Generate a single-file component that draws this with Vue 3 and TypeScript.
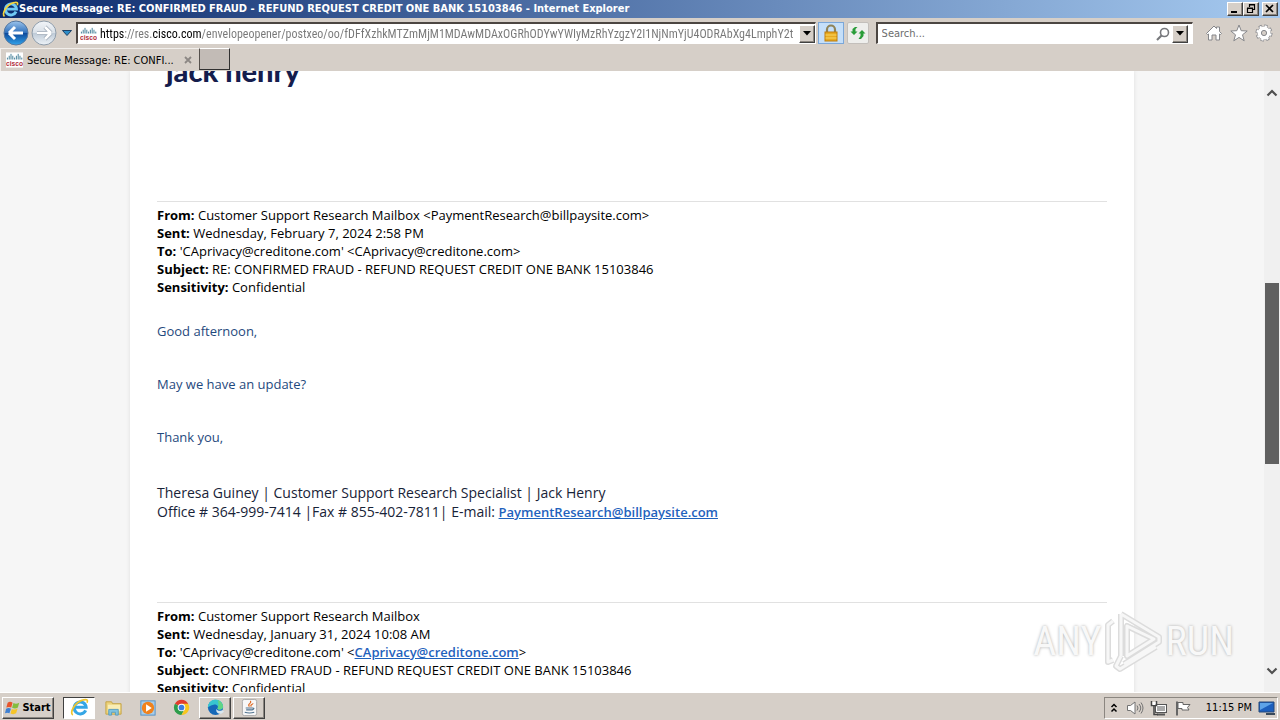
<script setup lang="ts">
import { ref } from 'vue'

interface Header {
  label: string
  value: string
  link?: string
  tail?: string
}

const url = ref('https://res.cisco.com/envelopeopener/postxeo/oo/fDFfXzhkMTZmMjM1MDAwMDAxOGRhODYwYWIyMzRhYzgzY2I1NjNmYjU4ODRAbXg4LmphY2t')
const search = ref('')

const first: Header[] = [
  { label: 'From:', value: 'Customer Support Research Mailbox <PaymentResearch@billpaysite.com>' },
  { label: 'Sent:', value: 'Wednesday, February 7, 2024 2:58 PM' },
  { label: 'To:', value: "'CAprivacy@creditone.com' <CAprivacy@creditone.com>" },
  { label: 'Subject:', value: 'RE: CONFIRMED FRAUD - REFUND REQUEST CREDIT ONE BANK 15103846' },
  { label: 'Sensitivity:', value: 'Confidential' },
]
const second: Header[] = [
  { label: 'From:', value: 'Customer Support Research Mailbox' },
  { label: 'Sent:', value: 'Wednesday, January 31, 2024 10:08 AM' },
  { label: 'To:', value: "'CAprivacy@creditone.com' <", link: 'CAprivacy@creditone.com', tail: '>' },
  { label: 'Subject:', value: 'CONFIRMED FRAUD - REFUND REQUEST CREDIT ONE BANK 15103846' },
  { label: 'Sensitivity:', value: 'Confidential' },
]
const ciscoBars = [2, 4, 6, 4, 2, 4, 6, 4, 2]
</script>

<template>
  <div class="window">
    <header class="titlebar">
      <svg class="ie" viewBox="0 0 20 20" aria-hidden="true">
        <path d="M16.500 12.500A6.500 6.500 0 1 1 17 9.500H6" fill="none" stroke="#6fc8f4" stroke-width="3.400" />
        <path d="M3 18C-1 16 5 4 14 2c4-1 5 0 4 3" fill="none" stroke="#f5d33c" stroke-width="2" />
      </svg>
      <h1>Secure Message: RE: CONFIRMED FRAUD - REFUND REQUEST CREDIT ONE BANK 15103846 - Internet Explorer</h1>
      <div class="controls">
        <button class="raised" aria-label="Minimize"><svg viewBox="0 0 12 10"><path d="M2 8h6" stroke="#000" stroke-width="2" /></svg></button>
        <button class="raised" aria-label="Restore"><svg viewBox="0 0 12 10"><path d="M4.500 3V.5h5v5H8M4 1h6M2.500 4.500h5v4h-5zM2 4h6" fill="none" stroke="#000" stroke-width="1.200" /></svg></button>
        <button class="raised close" aria-label="Close"><svg viewBox="0 0 12 10"><path d="M2 1l7 7M9 1L2 8" stroke="#000" stroke-width="1.700" /></svg></button>
      </div>
    </header>

    <nav class="toolbar" aria-label="Navigation">
      <button class="plain round" aria-label="Back">
        <svg viewBox="0 0 26 26">
          <defs>
            <linearGradient id="back" x1="0" y1="0" x2="0" y2="1"><stop offset="0" stop-color="#9cc4ec" /><stop offset=".48" stop-color="#3272bd" /><stop offset=".5" stop-color="#0d4799" /><stop offset="1" stop-color="#31a4ec" /></linearGradient>
          </defs>
          <circle cx="13" cy="13" r="12" fill="url(#back)" stroke="#55779f" />
          <path d="M6 13l6-6M6 13l6 6M6.500 13H20" fill="none" stroke="#fff" stroke-width="3" />
        </svg>
      </button>
      <button class="plain round" aria-label="Forward">
        <svg viewBox="0 0 26 26">
          <defs>
            <linearGradient id="fwd" x1="0" y1="0" x2="0" y2="1"><stop offset="0" stop-color="#f2f5f9" /><stop offset=".48" stop-color="#d9e0e7" /><stop offset=".5" stop-color="#bdc9d6" /><stop offset="1" stop-color="#eef3f8" /></linearGradient>
          </defs>
          <circle cx="13" cy="13" r="12" fill="url(#fwd)" stroke="#8f9dab" />
          <path d="M20 13l-6-6M20 13l-6 6M19.500 13H6" fill="none" stroke="#98a5b3" stroke-width="4" />
          <path d="M20 13l-6-6M20 13l-6 6M19.500 13H6" fill="none" stroke="#fff" stroke-width="2.600" />
        </svg>
      </button>
      <button class="plain recent" aria-label="Recent pages"><svg viewBox="0 0 12 8"><path d="M1.500 1.500h9L6 6.500z" fill="#2c8dc8" stroke="#1b4167" /></svg></button>

      <div class="field address">
        <svg class="cisco" viewBox="0 0 18 16" aria-hidden="true">
          <rect width="18" height="16" fill="#fff" />
          <path v-for="(h, i) in ciscoBars" :key="i" :d="`M${1.5 + i * 1.9} 7.5v-${h}`" stroke="#3c7a94" stroke-width="1" />
          <text x="9" y="14" text-anchor="middle" class="cisco-word">cisco</text>
        </svg>
        <input v-model="url" class="url" aria-label="Address">
        <button class="raised drop" aria-label="Show address list"><svg viewBox="0 0 8 5"><path d="M0 0h8L4 4.500z" /></svg></button>
      </div>
      <button class="lock" aria-label="Security report">
        <svg viewBox="0 0 18 18"><path d="M5 9V5.500a4 4 0 0 1 8 0V9" fill="none" stroke="#8f8358" stroke-width="2.200" /><rect x="3" y="8" width="12" height="9" fill="#e8aa20" stroke="#bd7c0c" /><path d="M3.500 11h11M3.500 14h11" stroke="#f8d867" /></svg>
      </button>
      <button class="refresh" aria-label="Refresh">
        <svg viewBox="0 0 18 18"><path d="M1.500 7.500L5 11l3.500-3.500H6.500V5l2-2H6L3.500 5v2.500zM16.500 9.500L13 6 9.500 9.500h2V12l-2 3H12l2.500-3V9.500z" fill="#299c38" /></svg>
      </button>

      <div class="field finder">
        <input v-model="search" class="query" aria-label="Search" placeholder="Search...">
        <button class="plain glass" aria-label="Go"><svg viewBox="0 0 14 14"><circle cx="8.500" cy="5.500" r="4" fill="none" stroke="#77787c" stroke-width="1.600" /><path d="M5.500 8.500L1 13" stroke="#77787c" stroke-width="2.200" /></svg></button>
        <button class="raised drop" aria-label="Search providers"><svg viewBox="0 0 8 5"><path d="M0 0h8L4 4.500z" /></svg></button>
      </div>
      <div class="tools">
        <button class="plain" aria-label="Home"><svg viewBox="0 0 18 18"><path d="M1.500 9.500L9 2l2.500 2.500V3h3v4.500l2 2-1 1-1-.5v6H11v-5H7v5H3.500v-6l-1 .5z" fill="#fff" stroke="#85868a" /></svg></button>
        <button class="plain" aria-label="Favorites"><svg viewBox="0 0 18 18"><path d="M9 1l2.200 5.700 6 .3-4.700 3.800 1.700 6L9 13.400l-5.200 3.400 1.700-6L.8 7l6-.3z" fill="#fff" stroke="#85868a" /></svg></button>
        <button class="plain" aria-label="Tools"><svg viewBox="0 0 18 18"><circle cx="9" cy="9" r="7" fill="none" stroke="#85868a" stroke-width="3" stroke-dasharray="3.200 2.300" /><circle cx="9" cy="9" r="5" fill="#fff" stroke="#85868a" stroke-width="3.600" /><circle cx="9" cy="9" r="6.800" fill="none" stroke="#fff" stroke-width="1.800" stroke-dasharray="2.200 3.140" stroke-dashoffset="-.5" /><circle cx="9" cy="9" r="4.600" fill="none" stroke="#fff" stroke-width="3.600" /><circle cx="9" cy="9" r="2.600" fill="#d6cfc8" stroke="#85868a" /></svg></button>
      </div>
    </nav>

    <div class="tabs">
      <div class="tab">
        <svg class="cisco" viewBox="0 0 18 16" aria-hidden="true">
          <rect width="18" height="16" fill="#fff" />
          <path v-for="(h, i) in ciscoBars" :key="i" :d="`M${1.5 + i * 1.9} 7.5v-${h}`" stroke="#3c7a94" stroke-width="1" />
          <text x="9" y="14" text-anchor="middle" class="cisco-word">cisco</text>
        </svg>
        <span class="tab-title">Secure Message: RE: CONFI...</span>
        <button class="plain tab-close" aria-label="Close tab"><svg viewBox="0 0 8 8"><path d="M1 1l6 6M7 1L1 7" stroke="#8c8784" stroke-width="1.800" /></svg></button>
      </div>
      <button class="new-tab" aria-label="New tab"></button>
    </div>

    <div class="viewport">
      <main class="page">
        <article class="mail">
          <div class="brand">jack henry</div>
          <section class="quoted">
            <p v-for="h in first" :key="h.label"><b>{{ h.label }}</b> {{ h.value }}</p>
          </section>
          <div class="body">
            <p>Good afternoon,</p>
            <p>May we have an update?</p>
            <p>Thank you,</p>
          </div>
          <div class="signature">
            <p>Theresa Guiney | Customer Support Research Specialist | Jack Henry</p>
            <p>Office # 364-999-7414 |Fax # 855-402-7811| E-mail: <a href="mailto:PaymentResearch@billpaysite.com">PaymentResearch@billpaysite.com</a></p>
          </div>
          <section class="quoted">
            <p v-for="h in second" :key="h.label"><b>{{ h.label }}</b> {{ h.value }}<a v-if="h.link" :href="'mailto:' + h.link">{{ h.link }}</a>{{ h.tail }}</p>
          </section>
        </article>
      </main>
      <div class="scrollbar">
        <button class="plain" aria-label="Scroll up"><svg viewBox="0 0 12 8"><path d="M1.500 6.500L6 2l4.500 4.500" fill="none" stroke="#505050" stroke-width="2.200" /></svg></button>
        <div class="track"><div class="thumb"></div></div>
        <button class="plain" aria-label="Scroll down"><svg viewBox="0 0 12 8"><path d="M1.500 1.500L6 6l4.500-4.500" fill="none" stroke="#505050" stroke-width="2.200" /></svg></button>
      </div>
      <div class="watermark">
        <span>ANY</span>
        <svg viewBox="0 0 60 64" aria-hidden="true">
          <g fill="none" stroke-linejoin="round">
            <path d="M17 4v42M17 4l38 23v5L20 54M23 16v30l27-17zM9 11l-5 4v37l5-2M17 46l-5 10 4 3 36-22" stroke="#dcdcdc" stroke-width="6" />
            <path d="M17 4v42M17 4l38 23v5L20 54M23 16v30l27-17zM9 11l-5 4v37l5-2M17 46l-5 10 4 3 36-22" stroke="#f7f7f7" stroke-width="3" />
          </g>
        </svg>
        <span>RUN</span>
      </div>
    </div>

    <footer class="taskbar">
      <button class="raised start">
        <svg viewBox="0 0 18 18" aria-hidden="true"><path d="M3 3c2-1.500 4-1 5.500 0L7 8.500C5.500 7.500 3.500 7.500 1.500 8.500z" fill="#e8552c" /><path d="M9.500 3.500c2 1 4 1 6.500-.5L14.500 8.500c-2 1.200-4 1.200-6.500.3z" fill="#84bd3e" /><path d="M1.200 9.800c2-1 4-1 5.500 0L5 15c-1.500-1-3.500-1-5 0z" fill="#3f80d2" /><path d="M7.700 10c2 1 4 1 6.500-.3L12.500 15c-2 1.200-4 1.200-6.300.2z" fill="#f6c529" /></svg>
        <span>Start</span>
      </button>
      <div class="apps">
        <button class="app pressed" aria-label="Internet Explorer"><svg viewBox="0 0 20 20"><path d="M16.500 13A6.300 6.300 0 1 1 17 9.800H6" fill="none" stroke="#35a6e5" stroke-width="3.200" /><path d="M3 18C-1 16 5 4 14 2c4-1 5 0 4 3" fill="none" stroke="#efc52f" stroke-width="1.800" /></svg></button>
        <button class="app" aria-label="Explorer"><svg viewBox="0 0 20 20"><path d="M2 4h6l1 2h9v11H2z" fill="#ecd27b" stroke="#c5a345" /><path d="M4 7h13v7H4z" fill="#f9edb6" /><path d="M5 18v-6h10v6h-3v-3H8v3z" fill="#7fc3e0" stroke="#5a9cbd" /></svg></button>
        <button class="app" aria-label="Media Player"><svg viewBox="0 0 20 20"><rect x="3" y="3" width="15" height="15" fill="#a8cde9" stroke="#5591c5" /><circle cx="10.500" cy="10.500" r="6.500" fill="#f0821d" /><path d="M8.500 6.500l6 4-6 4z" fill="#fff" /></svg></button>
        <button class="app" aria-label="Chrome"><svg viewBox="0 0 20 20"><path d="M10 10L3.100 6A8 8 0 0 1 17 6z" fill="#e23c2e" /><path d="M10 10l-6.900-4A8 8 0 0 0 10 18l3-6z" fill="#2d9d4b" /><path d="M10 10V6h7A8 8 0 0 1 10 18l3.400-6z" fill="#f7c61f" /><circle cx="10" cy="10" r="4" fill="#fff" /><circle cx="10" cy="10" r="3" fill="#3d7de0" /></svg></button>
        <button class="app raised" aria-label="Edge"><svg viewBox="0 0 20 20"><circle cx="10" cy="10" r="8" fill="#1668b8" /><path d="M2 10a8 8 0 0 1 16-1c0 4-5 4-6 2 2-2-1-5-4-4-3 .6-5 2-6 3z" fill="#38c5cf" /><path d="M12 2.300A8 8 0 0 1 18 9c0 3.500-5 4-6 2 1-2 2-5 0-8.700z" fill="#62d584" /><path d="M11 11.500c1 2 4 2.500 6.500 1.500l1.500 1.500-3 2c-3 .6-6-1.500-5-5z" fill="#d9e7ee" /></svg></button>
        <button class="app raised" aria-label="Java"><svg viewBox="0 0 20 20"><rect x="2.500" y="1.500" width="15" height="17" rx="2" fill="#f7f7f7" stroke="#a9a9a9" /><path d="M10 9c-3-3 3-3 1-6M12 9c-2-2 2-2 1.500-3.500" fill="none" stroke="#de6a24" stroke-width="1.300" /><path d="M6 10.500h7.500M6.500 12.500h6.500M13.500 10.500q2.500.5-.5 2M5 15q5 1.500 10 0" fill="none" stroke="#51738f" stroke-width="1.200" /></svg></button>
      </div>
      <div class="tray">
        <button class="plain chev" aria-label="Show hidden icons"><svg viewBox="0 0 8 10"><path d="M1.500 4L4 1.500 6.500 4M1.500 8.500L4 6l2.500 2.500" fill="none" stroke="#000" stroke-width="1.500" /></svg></button>
        <button class="plain" aria-label="Volume"><svg viewBox="0 0 18 16"><path d="M1.500 5.500h3L9 2v12l-4.500-3.500h-3z" fill="#fff" stroke="#727272" /><path d="M11 5.500q2 2.500 0 5M13 4q3.500 4 0 8M15 2.500q4 5.500 0 11" fill="none" stroke="#727272" /></svg></button>
        <button class="plain" aria-label="Network"><svg viewBox="0 0 18 16"><rect x="5.500" y="4.500" width="11" height="8" fill="#aaa" stroke="#555" /><path d="M6.500 5.500h9v6h-9z" fill="none" stroke="#fff" /><path d="M7 14.500h8" stroke="#555" stroke-width="2" /><path d="M1.500 1v4.500h5V1M4 5.500v9h4" fill="none" stroke="#444" stroke-width="1.500" /><path d="M2.500 2h3v3h-3z" fill="#fff" /></svg></button>
        <button class="plain" aria-label="Action Center"><svg viewBox="0 0 18 16"><path d="M3 1.500v14" stroke="#666" stroke-width="2" /><path d="M4 2.500h5v2h7l-2.500 3L15 10H8V8.500H4z" fill="#fff" stroke="#666" /></svg></button>
        <time>11:15 PM</time>
        <button class="plain" aria-label="Show desktop"><svg viewBox="0 0 18 16"><path d="M1 2h15v10H1z" fill="#1c5fbd" stroke="#254879" /><path d="M2 3h13L2 10z" fill="#5da3e8" /><path d="M8 14h9" stroke="#3a4a5a" stroke-width="2" /></svg></button>
      </div>
    </footer>
  </div>
</template>

<style>
body {
  margin: 0;
}
</style>

<style scoped>
* {
  box-sizing: border-box;
}
.window {
  display: flex;
  flex-direction: column;
  height: 100vh;
  overflow: hidden;
  background: #d6cfc8;
  color: #000;
  font-family: "DejaVu Sans Condensed", "DejaVu Sans", sans-serif;
  font-size: 11px;
}
svg {
  display: block;
  flex: none;
}
button {
  display: flex;
  align-items: center;
  justify-content: center;
  margin: 0;
  padding: 0;
  border: 0;
  color: #000;
  font: inherit;
}
p {
  margin: 0;
}
.plain {
  background: none;
}
.raised {
  background: #d6cfc8;
  border: 1px solid;
  border-color: #fff #404040 #404040 #fff;
  box-shadow: inset -1px -1px #8b8680;
}
.titlebar {
  display: flex;
  align-items: center;
  flex: none;
  height: 18px;
  padding: 0 2px;
  background: linear-gradient(90deg, #0b2a6c, #a6caf0);
}
.ie {
  width: 17px;
  height: 17px;
}
h1 {
  flex: 1;
  margin: 0;
  color: #fff;
  font-size: 11px;
  font-weight: 700;
  line-height: 18px;
  white-space: nowrap;
}
.controls {
  display: flex;
}
.controls button {
  width: 16px;
  height: 14px;
}
.controls svg {
  width: 12px;
  height: 10px;
}
.controls .close {
  margin-left: 3px;
}
.toolbar {
  display: flex;
  align-items: center;
  flex: none;
  height: 30px;
  padding: 0 7px 0 2px;
}
.round {
  width: 28px;
}
.round svg {
  width: 26px;
  height: 26px;
}
.recent {
  width: 18px;
}
.recent svg {
  width: 12px;
  height: 8px;
}
.field {
  display: flex;
  align-items: center;
  height: 22px;
  padding-left: 2px;
  background: #fff;
  border: 1px solid;
  border-color: #4c4642 #fff #fff #4c4642;
  border-width: 2px 1px 1px 2px;
}
.field input {
  flex: 1;
  min-width: 0;
  height: 18px;
  padding: 0;
  border: 0;
  outline: 0;
  background-color: transparent;
  font: inherit;
}
.address {
  flex: 736;
  min-width: 0;
}
.cisco {
  width: 17px;
  height: 16px;
}
.cisco-word {
  fill: #b02c3a;
  font-family: "Liberation Sans", sans-serif;
  font-size: 7px;
  font-weight: 700;
}
.field .url {
  margin: 0 0 0 3px;
  background-image: linear-gradient(90deg, #000 24px, #777 24px, #777 53px, #000 53px, #000 101px, #777 101px);
  -webkit-background-clip: text;
  background-clip: text;
  color: transparent;
  font-family: "Roboto Condensed", "Liberation Sans Narrow", sans-serif;
  font-size: 12px;
}
.drop {
  width: 16px;
  height: 18px;
}
.drop svg {
  width: 8px;
  height: 5px;
}
.lock {
  width: 26px;
  height: 22px;
  margin-left: 2px;
  background: #c5dff9;
  border: 1px solid #7ba7d9;
}
.refresh {
  width: 22px;
  height: 22px;
  margin: 0 7px 0 3px;
  background: #eeeeec;
  border: 1px solid #c3bfbb;
  border-radius: 2px;
}
.lock svg,
.refresh svg {
  width: 18px;
  height: 18px;
}
.finder {
  flex: 309;
  padding-right: 4px;
}
.query {
  color: #555;
}
.field .query {
  margin-left: 2px;
}
.query::placeholder {
  color: #6d6d6d;
  opacity: 1;
}
.glass {
  width: 18px;
}
.glass svg {
  width: 14px;
  height: 14px;
}
.tools {
  display: flex;
  gap: 7px;
  margin-left: 12px;
}
.tools svg {
  width: 18px;
  height: 18px;
}
.tabs {
  display: flex;
  flex: none;
  height: 23px;
}
.tab {
  display: flex;
  align-items: center;
  width: 199px;
  padding: 0 6px 0 5px;
  border-top: 1px solid #f2efec;
  border-left: 1px solid #f2efec;
}
.tab-title {
  flex: 1;
  margin-left: 4px;
  white-space: nowrap;
}
.tab-close {
  width: 10px;
}
.tab-close svg {
  width: 8px;
  height: 8px;
}
.new-tab {
  width: 31px;
  height: 22px;
  background: #c2bbb6;
  border: 1px solid;
  border-color: #fff #303030 #303030 #55504c;
}
.viewport {
  position: relative;
  display: flex;
  flex: 1;
  min-height: 0;
  overflow: hidden;
  background: #f6f6f6;
}
.page {
  flex: 1;
  min-width: 0;
  padding: 0 130px;
}
.mail {
  padding: 0 27px;
  background: #fff;
  box-shadow: 0 0 4px #ddd;
  font-family: "Open Sans", "Noto Sans", sans-serif;
  font-size: 13px;
  line-height: 18px;
}
.mail b {
  font-weight: 700;
}
.brand {
  height: 130px;
  padding-left: 9px;
  color: #151d4d;
  font-family: Lato, sans-serif;
  font-size: 29px;
  font-weight: 900;
  line-height: 0;
}
.quoted {
  padding-top: 4px;
  border-top: 1px solid #e1e1e1;
}
.body {
  display: flex;
  flex-direction: column;
  gap: 35px;
  margin-top: 26px;
  color: #1f497d;
}
.signature {
  margin: 37px 0 80px;
  color: #182338;
  font-size: 14px;
  line-height: 19px;
}
.mail a {
  color: #1f62bd;
  font-size: 13px;
  font-weight: 600;
}
.scrollbar {
  display: flex;
  flex-direction: column;
  flex: none;
  width: 16px;
  background: #f0f0f0;
}
.scrollbar button {
  height: 43px;
}
.scrollbar svg {
  width: 12px;
  height: 8px;
}
.track {
  display: flex;
  flex: 1;
  flex-direction: column;
  padding: 0 1px;
}
.track::before {
  flex: 169;
  content: "";
}
.thumb {
  flex: 181;
  background: #606060;
}
.track::after {
  flex: 185;
  content: "";
}
.watermark {
  position: absolute;
  right: 46px;
  bottom: 18px;
  display: flex;
  align-items: center;
  gap: 2px;
  color: #f8f8f8;
  font-family: "Roboto Condensed", "Liberation Sans Narrow", "Liberation Sans", sans-serif;
  font-size: 40px;
  line-height: 64px;
  text-shadow: 0 0 3px #aaa;
}
.watermark svg {
  width: 60px;
  height: 64px;
}
.taskbar {
  display: flex;
  align-items: center;
  flex: none;
  height: 28px;
  padding: 2px 2px 0;
  border-top: 1px solid #fff;
  box-shadow: 0 -1px #d6cfc8;
}
.start {
  width: 52px;
  height: 22px;
  gap: 1px;
  font-weight: 700;
}
.start svg {
  width: 16px;
  height: 16px;
}
.apps {
  display: flex;
  flex: 1;
  gap: 2px;
  margin-left: 9px;
}
.app {
  width: 32px;
  height: 22px;
}
.app:not(.raised) {
  background: none;
}
.app.pressed {
  background: #fff;
  border: 1px solid;
  border-color: #404040 #fff #fff #404040;
}
.app svg {
  width: 19px;
  height: 19px;
}
.tray {
  display: flex;
  align-items: center;
  height: 22px;
  padding: 0 1px 0 5px;
  border: 1px solid;
  border-color: #8b8680 #fff #fff #8b8680;
}
.tray svg {
  width: 18px;
  height: 16px;
}
.tray button {
  margin-right: 6px;
}
.tray .chev svg {
  width: 8px;
  height: 10px;
}
.tray .chev {
  margin-right: 8px;
}
.tray time {
  margin: 0 6px 0 8px;
  white-space: nowrap;
}
.tray button:last-child {
  margin: 0;
}
</style>
